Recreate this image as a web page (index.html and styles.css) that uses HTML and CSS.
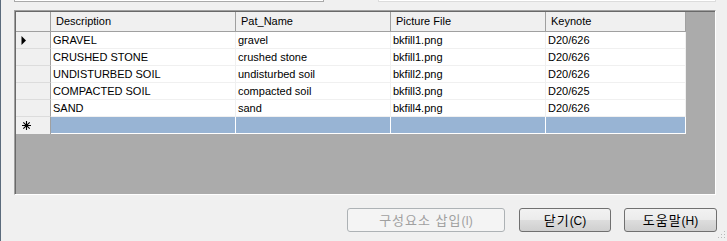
FILE: index.html
```html
<!DOCTYPE html>
<html lang="ko">
<head>
    <meta charset="UTF-8">
    <title>Fill Patterns</title>
    <link rel="stylesheet" href="styles.css">
</head>
<body>
    <div id="window">
        <div class="top-fields">
            <div class="field field-name"></div>
            <div class="field field-path"></div>
        </div>

        <div class="grid">
            <div class="grid-row header">
                <div class="row-head"></div>
                <div class="cell c-desc">Description</div>
                <div class="cell c-pat">Pat_Name</div>
                <div class="cell c-pic">Picture File</div>
                <div class="cell c-key">Keynote</div>
            </div>
            <div class="grid-row">
                <div class="row-head">
                    <svg width="6" height="9" viewBox="0 0 6 9"><path d="M0.5 0 L5 4.5 L0.5 9 Z" fill="#000"/></svg>
                </div>
                <div class="cell c-desc">GRAVEL</div>
                <div class="cell c-pat">gravel</div>
                <div class="cell c-pic">bkfill1.png</div>
                <div class="cell c-key">D20/626</div>
            </div>
            <div class="grid-row">
                <div class="row-head"></div>
                <div class="cell c-desc">CRUSHED STONE</div>
                <div class="cell c-pat">crushed stone</div>
                <div class="cell c-pic">bkfill1.png</div>
                <div class="cell c-key">D20/626</div>
            </div>
            <div class="grid-row">
                <div class="row-head"></div>
                <div class="cell c-desc">UNDISTURBED SOIL</div>
                <div class="cell c-pat">undisturbed soil</div>
                <div class="cell c-pic">bkfill2.png</div>
                <div class="cell c-key">D20/626</div>
            </div>
            <div class="grid-row">
                <div class="row-head"></div>
                <div class="cell c-desc">COMPACTED SOIL</div>
                <div class="cell c-pat">compacted soil</div>
                <div class="cell c-pic">bkfill3.png</div>
                <div class="cell c-key">D20/625</div>
            </div>
            <div class="grid-row">
                <div class="row-head"></div>
                <div class="cell c-desc">SAND</div>
                <div class="cell c-pat">sand</div>
                <div class="cell c-pic">bkfill4.png</div>
                <div class="cell c-key">D20/626</div>
            </div>
            <div class="grid-row new-row">
                <div class="row-head">
                    <svg width="11" height="11" viewBox="0 0 11 11">
                        <path d="M5.5 1 V10 M1 5.5 H10 M2.3 2.3 L8.7 8.7 M8.7 2.3 L2.3 8.7" stroke="#000" stroke-width="1.1" fill="none"/>
                    </svg>
                </div>
                <div class="cell c-desc"></div>
                <div class="cell c-pat"></div>
                <div class="cell c-pic"></div>
                <div class="cell c-key"></div>
            </div>
        </div>

        <div class="buttons">
            <button class="btn btn-insert" disabled>구성요소 삽입<span class="key">(I)</span></button>
            <button class="btn btn-close">닫기<span class="key">(C)</span></button>
            <button class="btn btn-help">도움말<span class="key">(H)</span></button>
        </div>
        <div class="grip">
            <svg width="10" height="10" viewBox="0 0 10 10">
                <rect x="8" y="2" width="1" height="1" fill="#b8b8b8"/>
                <rect x="5" y="5" width="1" height="1" fill="#b8b8b8"/>
                <rect x="8" y="5" width="1" height="1" fill="#b8b8b8"/>
                <rect x="2" y="8" width="1" height="1" fill="#b8b8b8"/>
                <rect x="5" y="8" width="1" height="1" fill="#b8b8b8"/>
                <rect x="8" y="8" width="1" height="1" fill="#b8b8b8"/>
            </svg>
        </div>
    </div>
</body>
</html>
```

FILE: styles.css
```css
body {
    margin: 0;
    background-color: #f0f0f0;
    font-family: 'Liberation Sans', Arial, sans-serif;
    font-size: 11px;
    color: #000;
    overflow: hidden;
}
#window {
    position: relative;
    height: 241px;
    border-left: 1px solid #5b6b7c;
    padding-left: 13px;
    box-sizing: border-box;
}
.top-fields {
    display: flex;
    height: 10px;
}
.field {
    height: 1px;
    border: 1px solid #a9a9a9;
    border-top: none;
    background: #fff;
}
.field-name {
    width: 308px;
}
.field-path {
    width: 336px;
    margin-left: 54px;
    border-color: #dcdcdc;
}
.grid {
    width: 702px;
    height: 185px;
    box-sizing: border-box;
    background-color: #ababab;
    border-top: 1px solid #a0a0a0;
    border-left: 1px solid #a0a0a0;
    border-right: 1px solid #ffffff;
    border-bottom: 1px solid #ffffff;
    box-shadow: inset 1px 1px 0 #696969;
    padding: 1px 0 0 1px;
}
.grid-row {
    display: flex;
    height: 17px;
    background-color: #fff;
    width: 670px;
}
.grid-row.header {
    height: 20px;
    background-color: #f0f0f0;
}
.row-head {
    width: 35px;
    box-sizing: border-box;
    background-color: #f0f0f0;
    border-right: 1px solid #a0a0a0;
    border-bottom: 1px solid #dcdcdc;
    display: flex;
    align-items: center;
    padding-left: 5px;
}
.header .row-head {
    border-bottom: 1px solid #a0a0a0;
}
.cell {
    box-sizing: border-box;
    border-right: 1px solid #f0f0f0;
    border-bottom: 1px solid #f0f0f0;
    padding: 0 2px;
    line-height: 16px;
    white-space: nowrap;
    overflow: hidden;
}
.header .cell {
    border-right: 1px solid #a0a0a0;
    border-bottom: 1px solid #a0a0a0;
    padding: 0 5px;
    line-height: 19px;
}
.c-desc { width: 185px; }
.c-pat { width: 155px; }
.c-pic { width: 155px; }
.c-key { width: 140px; }
.new-row .cell {
    background-color: #98b4d4;
    border-right-color: #ffffff;
    border-bottom-color: #ffffff;
}
.new-row .row-head {
    border-bottom: none;
}
.buttons {
    display: flex;
    justify-content: flex-end;
    gap: 13px;
    margin-top: 13px;
    padding-right: 10px;
}
.btn {
    height: 24px;
    box-sizing: border-box;
    border: 1px solid #707070;
    border-radius: 3px;
    background: linear-gradient(#f2f2f2 0%, #ebebeb 50%, #dddddd 51%, #cfcfcf 100%);
    font-family: 'Noto Sans CJK KR', 'Liberation Sans', sans-serif;
    font-size: 13px;
    letter-spacing: 1px;
    color: #000;
    padding: 0;
    line-height: 20px;
}
.btn .key {
    font-family: 'Liberation Sans', Arial, sans-serif;
    font-size: 12px;
    letter-spacing: 0;
}
.btn-insert {
    width: 158px;
    margin-right: 1px;
}
.btn-insert:disabled {
    background: #f4f4f4;
    border-color: #adb2b5;
    color: #a0a0a0;
}
.btn-close {
    width: 92px;
}
.btn-help {
    width: 93px;
}
.grip {
    position: absolute;
    right: 1px;
    bottom: 2px;
    width: 10px;
    height: 10px;
}
```
